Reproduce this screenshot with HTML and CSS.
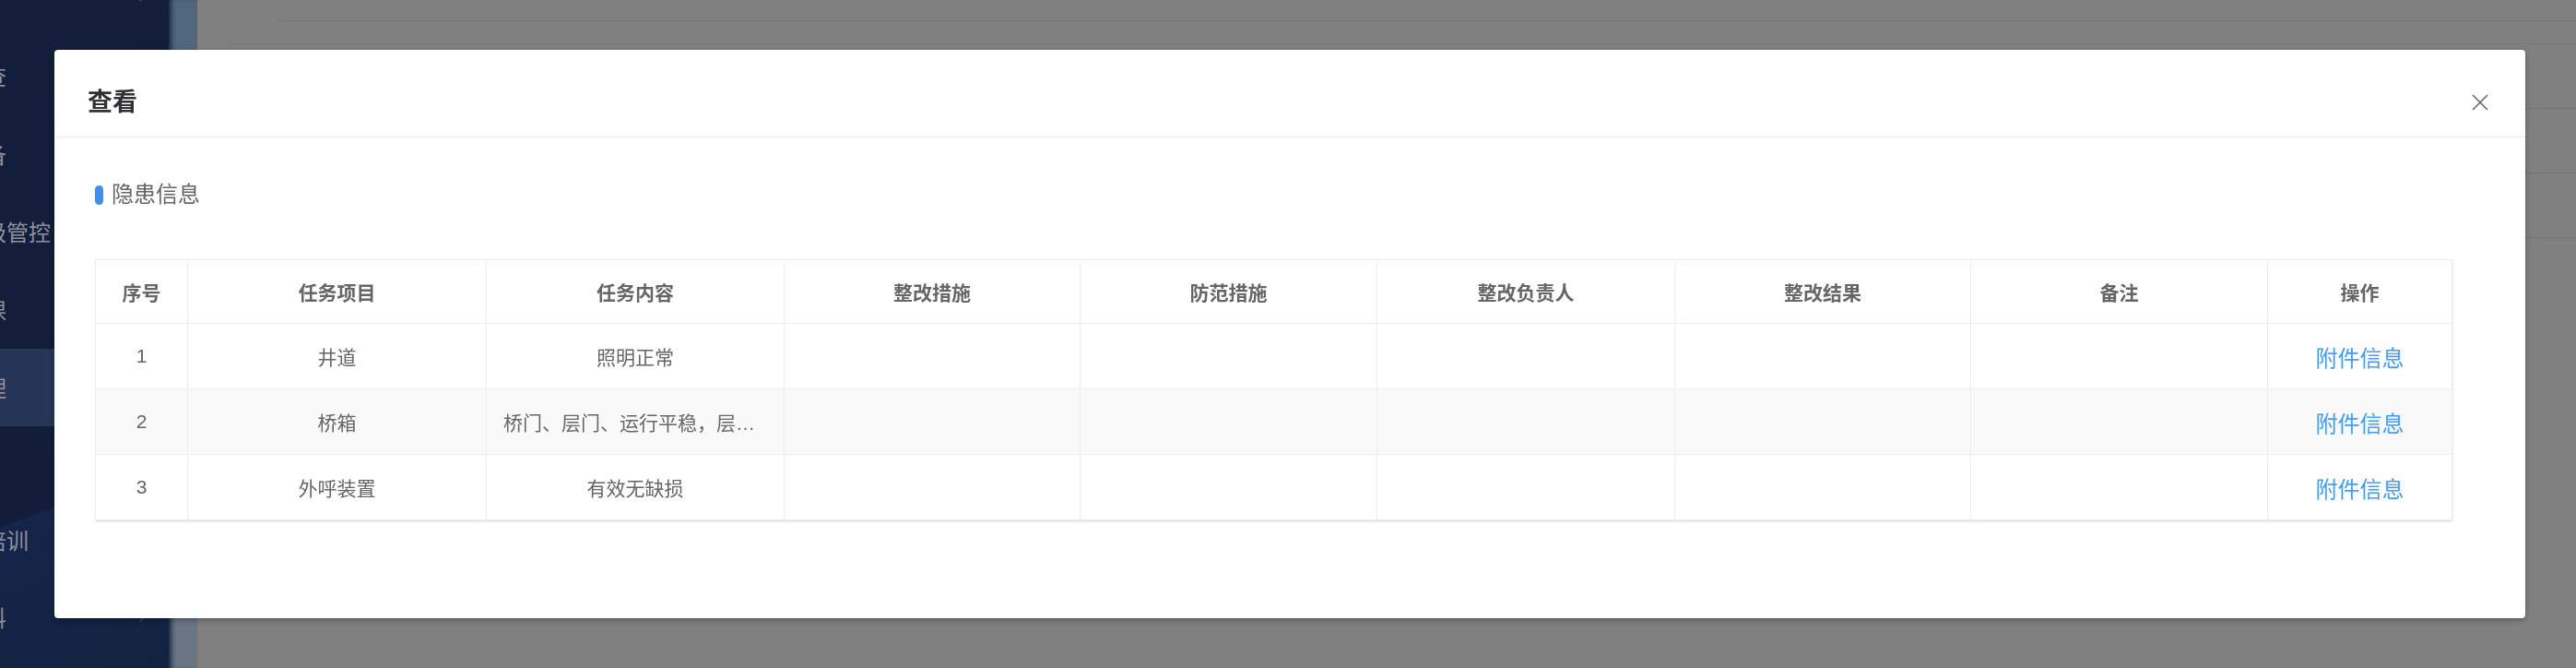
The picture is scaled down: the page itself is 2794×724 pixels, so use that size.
FILE: index.html
```html
<!DOCTYPE html>
<html lang="zh-CN">
<head>
    <meta charset="UTF-8">
    <title>查看</title>
    <link rel="stylesheet" href="styles.css">
</head>
<body>

<div class="layout">
    <div class="sidebar">
        <ul class="menu">
            <li class="menu-item"><span class="menu-text">安全生产</span><span class="arrow"></span></li>
            <li class="menu-item"><span class="menu-text">安全检查</span></li>
            <li class="menu-item"><span class="menu-text">特种设备</span></li>
            <li class="menu-item"><span class="menu-text">风险分级管控</span></li>
            <li class="menu-item"><span class="menu-text">安全微课</span></li>
            <li class="menu-item active"><span class="menu-text">隐患治理</span></li>
            <li class="menu-item short"><span class="menu-text">考试</span></li>
            <li class="menu-item"><span class="menu-text">新员工培训</span></li>
            <li class="menu-item"><span class="menu-text">学习资料</span><span class="arrow"></span></li>
        </ul>
    </div>
    <div class="side-strip"></div>
    <div class="main">
        <div class="topbar"></div>
        <div class="bg-table">
            <div class="bg-row"><span class="c1"></span><span class="c2"></span><span class="c3"></span><span class="c4"></span></div>
            <div class="bg-row"></div>
            <div class="bg-row"></div>
        </div>
    </div>
</div>

<div class="dialog">
    <div class="dialog-header">
        <span class="dialog-title">查看</span>
        <button class="dialog-close" aria-label="关闭">
            <svg width="18" height="18" viewBox="0 0 18 18"><path d="M1 1L17 17M17 1L1 17" stroke="#666" stroke-width="1.6" fill="none"/></svg>
        </button>
    </div>
    <div class="dialog-body">
        <div class="section-title"><span class="pill"></span>隐患信息</div>
        <div class="table-wrap">
            <table class="data-table">
                <colgroup>
                    <col style="width: 100px">
                    <col style="width: 324px">
                    <col style="width: 323px">
                    <col style="width: 321px">
                    <col style="width: 322px">
                    <col style="width: 323px">
                    <col style="width: 321px">
                    <col style="width: 322px">
                    <col style="width: 200px">
                </colgroup>
                <thead>
                    <tr>
                        <th>序号</th>
                        <th>任务项目</th>
                        <th>任务内容</th>
                        <th>整改措施</th>
                        <th>防范措施</th>
                        <th>整改负责人</th>
                        <th>整改结果</th>
                        <th>备注</th>
                        <th>操作</th>
                    </tr>
                </thead>
                <tbody>
                    <tr>
                        <td>1</td>
                        <td>井道</td>
                        <td>照明正常</td>
                        <td></td>
                        <td></td>
                        <td></td>
                        <td></td>
                        <td></td>
                        <td><a class="link">附件信息</a></td>
                    </tr>
                    <tr class="striped">
                        <td>2</td>
                        <td>桥箱</td>
                        <td class="ellipsis">桥门、层门、运行平稳，层门地坎间隙正常</td>
                        <td></td>
                        <td></td>
                        <td></td>
                        <td></td>
                        <td></td>
                        <td><a class="link">附件信息</a></td>
                    </tr>
                    <tr>
                        <td>3</td>
                        <td>外呼装置</td>
                        <td>有效无缺损</td>
                        <td></td>
                        <td></td>
                        <td></td>
                        <td></td>
                        <td></td>
                        <td><a class="link">附件信息</a></td>
                    </tr>
                </tbody>
            </table>
        </div>
    </div>
</div>

</body>
</html>
```

FILE: styles.css
```css
html, body {
    margin: 0;
    padding: 0;
    height: 100%;
}
body {
    font-family: "Liberation Sans", "Noto Sans CJK SC", sans-serif;
    background-color: #808080;
    overflow: hidden;
}
.layout {
    display: flex;
    height: 724px;
}

/* sidebar (under the mask) */
.sidebar {
    width: 183px;
    flex-shrink: 0;
    overflow: hidden;
    background: linear-gradient(160deg, #121e3b 0%, #111d39 72%, #15254a 72.5%, #13223f 100%);
}
.menu {
    list-style: none;
    margin: -45px 0 0 0;
    padding: 0;
}
.menu-item {
    position: relative;
    height: 84.5px;
    display: flex;
    align-items: center;
    font-size: 24px;
    color: #8d929c;
    white-space: nowrap;
}
.menu-item.short {
    height: 80px;
}
.menu-item.active {
    background: #253656;
}
.menu-text {
    margin-left: -89px;
}
.arrow {
    position: absolute;
    left: 148px;
    top: 36px;
    width: 7px;
    height: 7px;
    border-right: 2px solid #3e4658;
    border-bottom: 2px solid #3e4658;
    transform: rotate(-45deg);
}
.side-strip {
    width: 31px;
    flex-shrink: 0;
    background: linear-gradient(to bottom, #50667f 0%, #5a6c80 50%, #6b7684 100%);
    box-shadow: inset 6px 0 5px -3px #1c2a44;
}
.main {
    flex: 1;
}
.topbar {
    height: 22px;
    margin-left: 87px;
    border-bottom: 1px solid #747474;
}
.bg-table {
    margin: 24px 0 0 36px;
    border-top: 1px solid #777;
}
.bg-row {
    height: 69px;
    display: flex;
    border-bottom: 1px solid #747474;
}
.bg-row span {
    border-left: 1px solid #777;
}
.bg-row .c1 { width: 99px; }
.bg-row .c2 { width: 99px; }
.bg-row .c3 { width: 189px; }
.bg-row .c4 { flex: 1; }

/* dialog */
.dialog {
    position: fixed;
    left: 59px;
    top: 54px;
    width: 2680px;
    height: 616px;
    background: #fff;
    border-radius: 4px;
    box-shadow: 0 2px 6px rgba(0, 0, 0, 0.3);
}
.dialog-header {
    display: flex;
    align-items: center;
    justify-content: space-between;
    padding: 39px 40px 19px 36px;
    border-bottom: 1px solid #ebebeb;
}
.dialog-title {
    font-size: 27px;
    line-height: 36px;
    font-weight: bold;
    color: #303133;
}
.dialog-close {
    background: none;
    border: none;
    padding: 0;
    width: 18px;
    height: 18px;
    cursor: pointer;
    display: flex;
}
.dialog-body {
    padding: 50px 80px 0 44px;
}
.section-title {
    display: flex;
    align-items: center;
    gap: 9px;
    font-size: 24px;
    line-height: 24px;
    color: #666;
}
.pill {
    width: 9px;
    height: 21px;
    border-radius: 5px;
    background: #3e8ef7;
}
.table-wrap {
    margin-top: 58px;
    box-shadow: 1px 1px 2px rgba(0, 0, 0, 0.18);
}
.data-table {
    width: 100%;
    table-layout: fixed;
    border-collapse: collapse;
    font-size: 21px;
    color: #666;
}
.data-table th, .data-table td {
    border: 1px solid #efeee8;
    padding: 0 18px;
    text-align: center;
    white-space: nowrap;
}
.data-table th {
    height: 68px;
    font-weight: bold;
}
.data-table td {
    height: 70px;
}
.data-table tr.striped td {
    background: #f9f9f9;
}
.ellipsis {
    overflow: hidden;
    text-overflow: ellipsis;
    text-align: left !important;
}
.link {
    font-size: 24px;
    color: #409eff;
    cursor: pointer;
}
```
